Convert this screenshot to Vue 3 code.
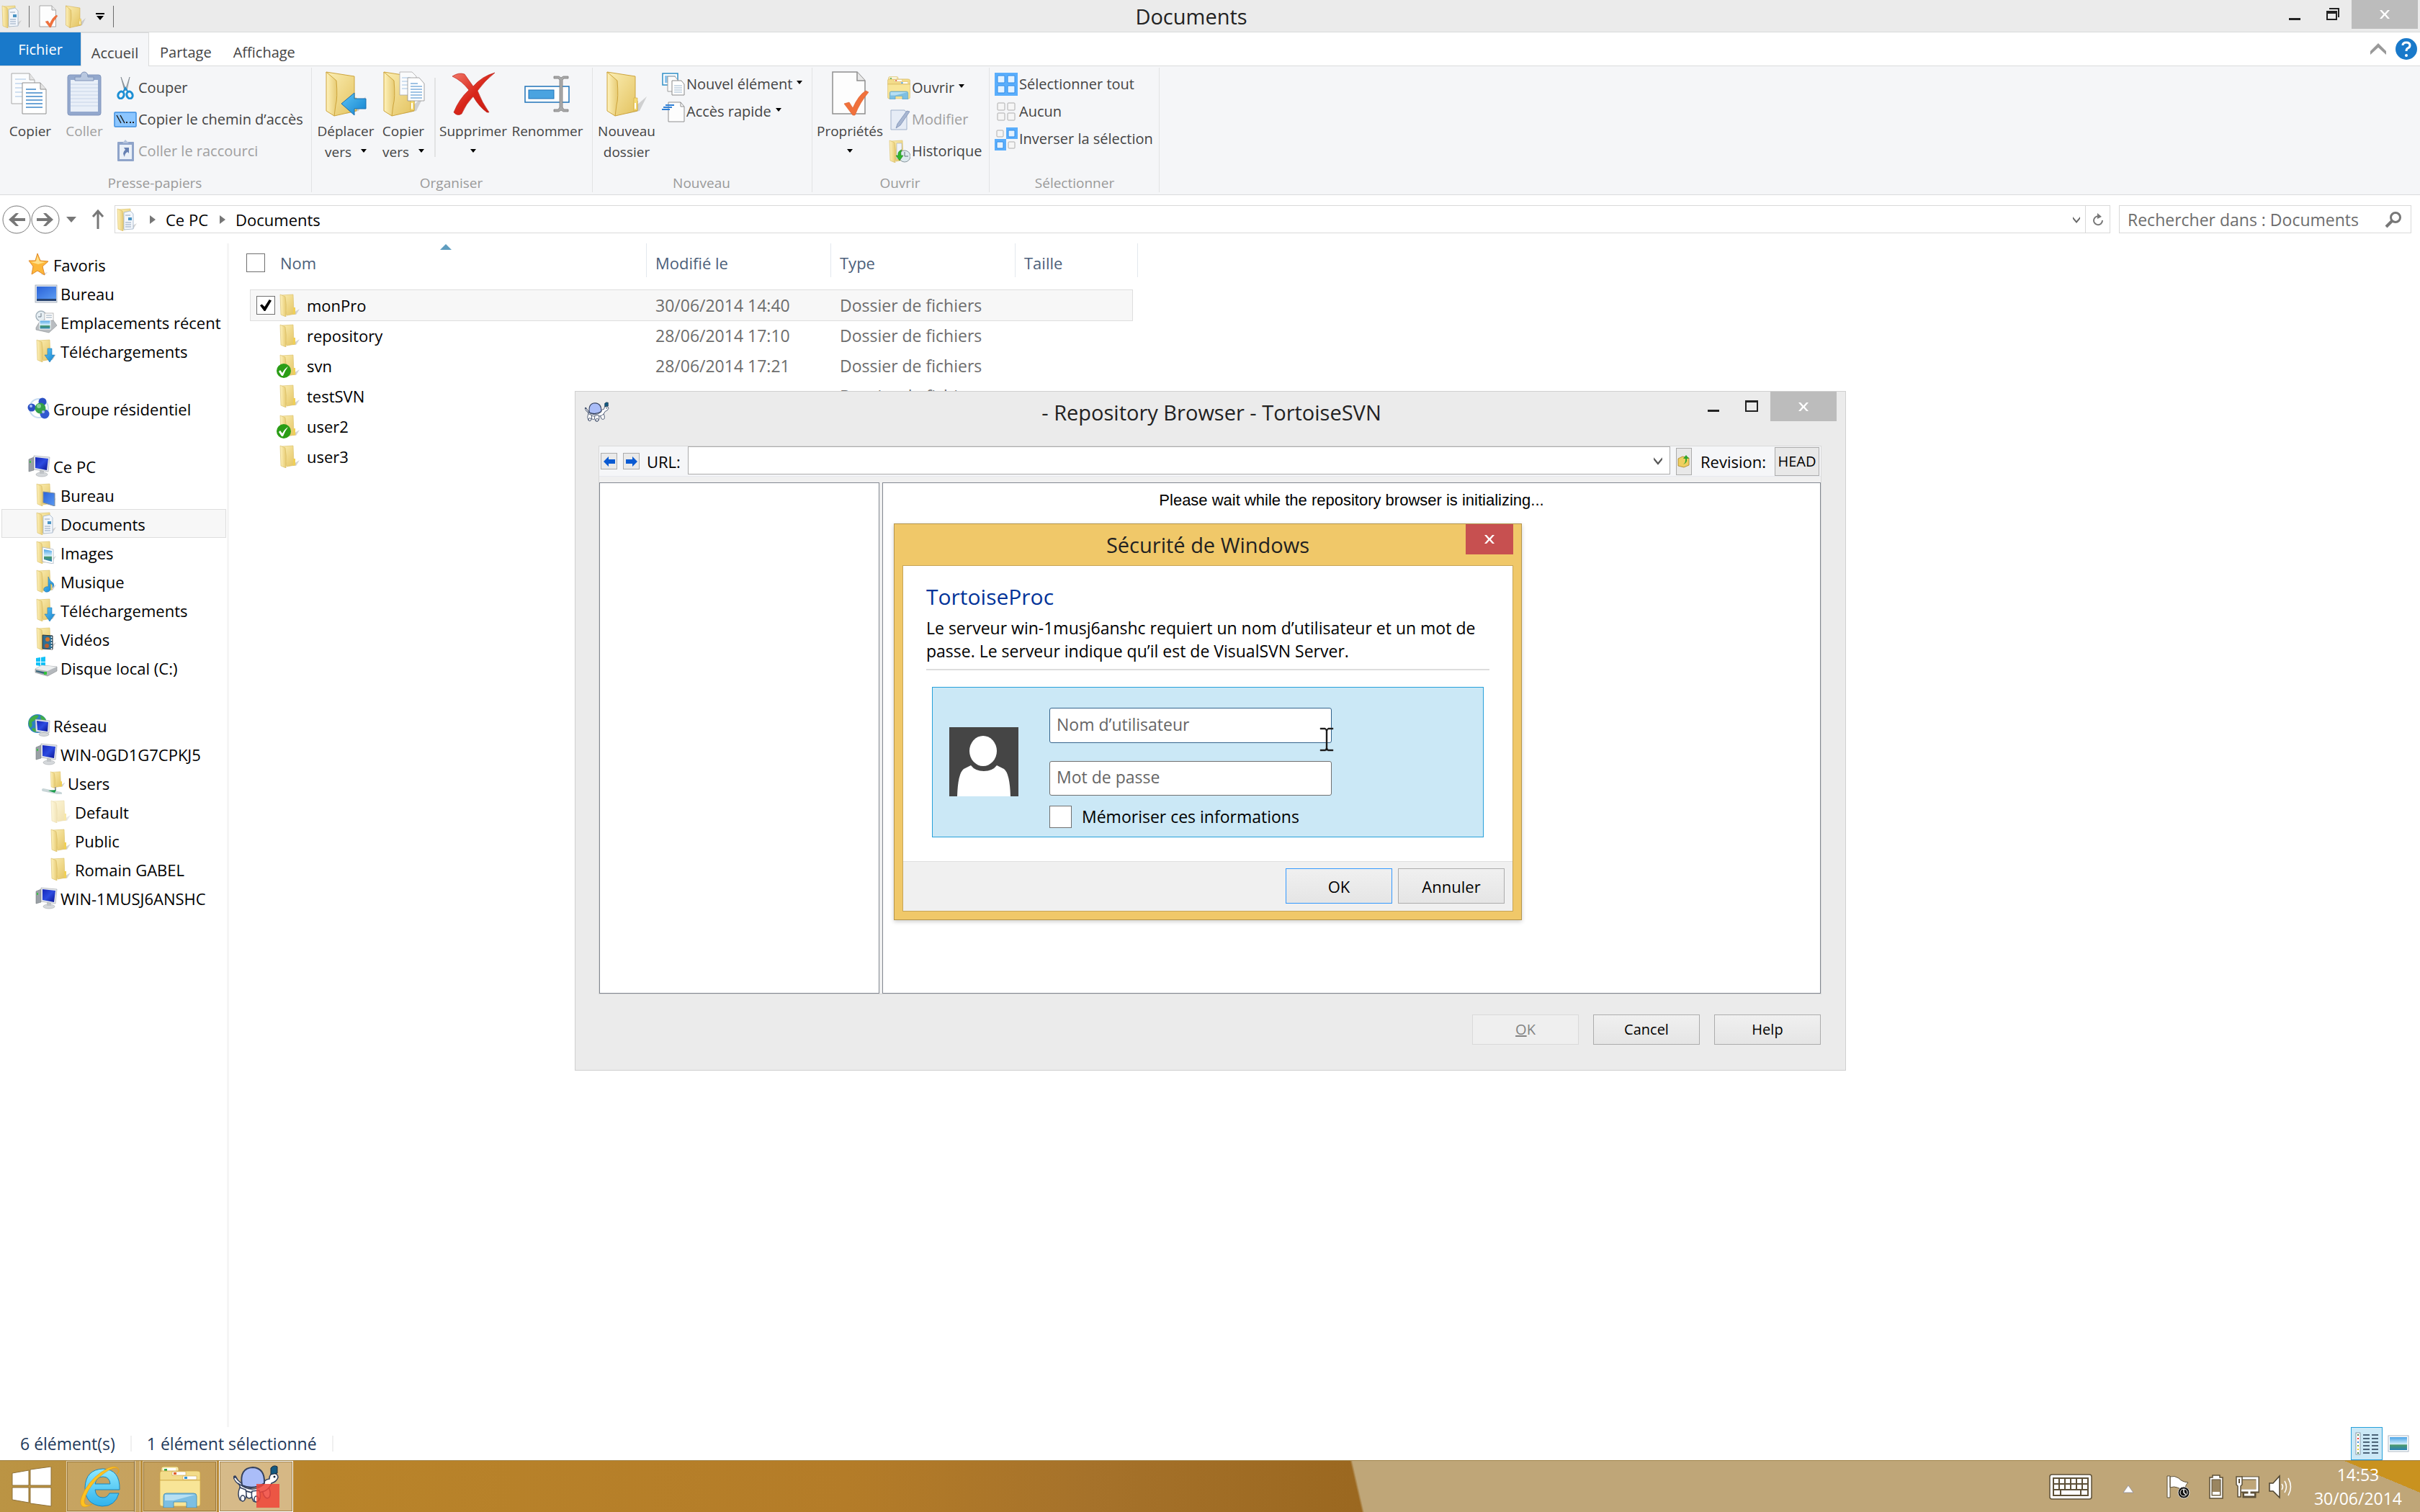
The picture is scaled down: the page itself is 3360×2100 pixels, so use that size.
<script setup>
import { ref } from 'vue'

const tree = [
  { id: 'fav', label: 'Favoris', icon: 'star', level: 0 },
  { id: 'fav-desk', label: 'Bureau', icon: 'desktop', level: 1 },
  { id: 'fav-recent', label: 'Emplacements récent', icon: 'recent', level: 1 },
  { id: 'fav-down', label: 'Téléchargements', icon: 'f-down', level: 1 },
  { id: 'home', label: 'Groupe résidentiel', icon: 'homegroup', level: 0, gap: true },
  { id: 'pc', label: 'Ce PC', icon: 'computer', level: 0, gap: true },
  { id: 'pc-desk', label: 'Bureau', icon: 'f-desk', level: 1 },
  { id: 'pc-docs', label: 'Documents', icon: 'f-docs', level: 1, current: true },
  { id: 'pc-img', label: 'Images', icon: 'f-img', level: 1 },
  { id: 'pc-mus', label: 'Musique', icon: 'f-mus', level: 1 },
  { id: 'pc-down', label: 'Téléchargements', icon: 'f-down', level: 1 },
  { id: 'pc-vid', label: 'Vidéos', icon: 'f-vid', level: 1 },
  { id: 'pc-c', label: 'Disque local (C:)', icon: 'disk', level: 1 },
  { id: 'net', label: 'Réseau', icon: 'network', level: 0, gap: true },
  { id: 'net-a', label: 'WIN-0GD1G7CPKJ5', icon: 'computer', level: 1 },
  { id: 'net-users', label: 'Users', icon: 'f-share', level: 2 },
  { id: 'net-default', label: 'Default', icon: 'folder', level: 3, faded: true },
  { id: 'net-public', label: 'Public', icon: 'folder', level: 3 },
  { id: 'net-romain', label: 'Romain GABEL', icon: 'folder', level: 3 },
  { id: 'net-b', label: 'WIN-1MUSJ6ANSHC', icon: 'computer', level: 1 },
]

const files = ref([
  { name: 'monPro', date: '30/06/2014 14:40', type: 'Dossier de fichiers', selected: true },
  { name: 'repository', date: '28/06/2014 17:10', type: 'Dossier de fichiers' },
  { name: 'svn', date: '28/06/2014 17:21', type: 'Dossier de fichiers', versioned: true },
  { name: 'testSVN', type: 'Dossier de fichiers' },
  { name: 'user2', versioned: true },
  { name: 'user3' },
])

const url = ref('')
const user = ref('')
const password = ref('')
const remember = ref(false)
</script>

<template>
  <div class="screen">
    <svg class="defs" width="0" height="0" aria-hidden="true">
      <defs>
        <linearGradient id="g-back" x1="0" y1="0" x2="1" y2="1">
          <stop offset="0" stop-color="#fbeeb4" /><stop offset="1" stop-color="#e3c25e" />
        </linearGradient>
        <linearGradient id="g-flap" x1="0" y1="0" x2="1" y2="0">
          <stop offset="0" stop-color="#fff3bd" /><stop offset="1" stop-color="#e6ca72" />
        </linearGradient>
        <linearGradient id="g-blue" x1="0" y1="0" x2="1" y2="1">
          <stop offset="0" stop-color="#5cc4f5" /><stop offset="1" stop-color="#1382cf" />
        </linearGradient>
        <linearGradient id="g-screen" x1="0" y1="0" x2="1" y2="1">
          <stop offset="0" stop-color="#1626b8" /><stop offset="0.5" stop-color="#2c4be0" /><stop offset="1" stop-color="#0a1390" />
        </linearGradient>
        <linearGradient id="g-desk" x1="0" y1="0" x2="1" y2="1">
          <stop offset="0" stop-color="#2a62d8" /><stop offset="1" stop-color="#5b9bf2" />
        </linearGradient>
        <linearGradient id="g-red" x1="0" y1="0" x2="1" y2="1">
          <stop offset="0" stop-color="#f2796a" /><stop offset="0.5" stop-color="#d8261a" /><stop offset="1" stop-color="#c8190f" />
        </linearGradient>
        <linearGradient id="g-ie" x1="0" y1="0" x2="0" y2="1">
          <stop offset="0" stop-color="#8ee9ff" /><stop offset="1" stop-color="#2fb2ec" />
        </linearGradient>
        <linearGradient id="g-sky" x1="0" y1="0" x2="0" y2="1">
          <stop offset="0" stop-color="#4ba3e6" /><stop offset="0.55" stop-color="#d6f0fb" /><stop offset="0.6" stop-color="#4c9a6b" /><stop offset="1" stop-color="#2b82b8" />
        </linearGradient>
      </defs>

      <symbol id="folder" viewBox="0 0 32 32">
        <path d="M18 28 L30 21 L25 29 Z" fill="#b9b9b9" opacity=".6" />
        <path d="M5 2 L21 1 L22 24 L24 25 L24 28 L12 30 Z" fill="url(#g-back)" stroke="#d9bd62" stroke-width=".6" />
        <path d="M21 19 h3 v9 l-3 1z" fill="#f0d056" />
        <path d="M3 1 L10 4 Q12 16 11 24 L11 32 L4 29 Z" fill="url(#g-flap)" stroke="#d6ba60" stroke-width=".6" />
      </symbol>
      <symbol id="folder-big" viewBox="0 0 60 64">
        <path d="M30 60 L58 36 L48 56 Z" fill="#8a8a8a" opacity=".35" />
        <path d="M3 2 L42 8 V40 L45 42 V56 L14 63 Z" fill="url(#g-back)" stroke="#cda43c" stroke-width="1" />
        <path d="M40 38 h5 v17 l-5 1z" fill="#f5dc74" stroke="#cda43c" stroke-width=".6" />
        <rect x="41" y="45" width="2" height="8" fill="#fff" />
        <path d="M3 2 L17 14 Q19 38 16 48 L14 63 L3 56 Z" fill="url(#g-flap)" stroke="#cda43c" stroke-width="1" />
      </symbol>
      <symbol id="f-docs" viewBox="0 0 32 32">
        <use href="#folder" />
        <path d="M12 6 L21 4 L25 8 L25 29 L12 30 Z" fill="#f2f6fb" stroke="#9fb3c8" stroke-width=".8" />
        <path d="M14 10 h7 M14 20 h8 M14 23 h8 M14 26 h8" stroke="#8fa4bd" />
        <rect x="18" y="13" width="5" height="4" fill="#4b94c4" />
      </symbol>
      <symbol id="f-down" viewBox="0 0 32 32">
        <use href="#folder" />
        <path d="M18 13 h6 v9 h4 L21 32 L14 22 h4z" fill="url(#g-blue)" stroke="#2478b4" stroke-width=".6" />
      </symbol>
      <symbol id="f-desk" viewBox="0 0 32 32">
        <use href="#folder" />
        <path d="M12 12 L28 14 V32 L12 27 Z" fill="url(#g-desk)" stroke="#7f8b99" />
      </symbol>
      <symbol id="f-img" viewBox="0 0 32 32">
        <use href="#folder" />
        <path d="M11 9 L26 12 V32 L11 29 Z" fill="#fff" stroke="#a7b4c2" stroke-width=".8" />
        <path d="M13 12 L24 14 V29 L13 26 Z" fill="url(#g-sky)" />
      </symbol>
      <symbol id="f-mus" viewBox="0 0 32 32">
        <use href="#folder" />
        <path d="M19 10 Q20 15 26 19 Q28 22 25 25 Q26 21 22 19 V28 Q20 32 15 31 Q11 28 14 25 Q17 23 19 24 Z" fill="url(#g-blue)" stroke="#2376ae" stroke-width=".6" />
      </symbol>
      <symbol id="f-vid" viewBox="0 0 32 32">
        <use href="#folder" />
        <path d="M11 11 L25 12 V31 L11 30 Z" fill="#2d6f94" stroke="#333" />
        <circle cx="18" cy="17" r="3" fill="#d4732c" /><circle cx="17" cy="26" r="3" fill="#b55d2e" />
        <path d="M23.500 13 V31" stroke="#fff" stroke-width="1.500" stroke-dasharray="2 2" />
      </symbol>
      <symbol id="f-share" viewBox="0 0 32 32">
        <g transform="translate(10 0) scale(.75)"><use href="#folder" width="32" height="32" /></g>
        <path d="M19 22 V27" stroke="#9a9a9a" stroke-width="2" />
        <path d="M2 26 L26 31" stroke="#c9d6d8" stroke-width="4" stroke-linecap="round" />
        <path d="M9 27 L20 26 L18 30 Z" fill="#1a9c4a" />
      </symbol>
      <symbol id="star" viewBox="0 0 32 32">
        <path d="M18 30 L28 27 L24 31Z" fill="#bbb" opacity=".6" />
        <path d="M14 1 L18 11 L29 12 L21 19 L24 31 L14 25 L6 30 L8 19 L2 11 L11 11 Z" fill="#fdb73a" stroke="#e0892a" />
        <path d="M14 4 L17 12 L25 13 L15 16 L5 13 L12 12 Z" fill="#ffe08a" />
      </symbol>
      <symbol id="desktop" viewBox="0 0 32 32">
        <rect x="1" y="5" width="30" height="24" fill="#dfe5ec" stroke="#9ba6b3" stroke-width=".8" />
        <rect x="3" y="7" width="27" height="17" fill="url(#g-desk)" />
        <rect x="3" y="24" width="27" height="3" fill="#27436f" />
      </symbol>
      <symbol id="recent" viewBox="0 0 32 32">
        <circle cx="9" cy="8" r="7" fill="#e6eef3" stroke="#a5b3bc" stroke-width="1.500" /><path d="M9 4 V9 H5" fill="none" stroke="#6c7b86" />
        <rect x="14" y="4" width="12" height="11" fill="#fff" stroke="#a9a9a9" stroke-width=".8" />
        <path d="M16 7 h8 M16 10 h8" stroke="#8fa3b5" />
        <path d="M2 24 L8 14 H26 L31 21 L20 31 L2 27 Z" fill="#b9bdc1" stroke="#85898d" stroke-width=".6" />
        <rect x="7" y="14" width="15" height="12" fill="url(#g-sky)" stroke="#fff" />
      </symbol>
      <symbol id="homegroup" viewBox="0 0 32 32">
        <circle cx="16" cy="16" r="13" fill="none" stroke="#c8dcf0" stroke-width="2" />
        <circle cx="21" cy="7" r="5.500" fill="#2b50c4" /><circle cx="6" cy="15" r="5.500" fill="#2b50c4" />
        <circle cx="24" cy="24" r="6.500" fill="#3158cf" /><circle cx="18" cy="16" r="7.500" fill="#35a04a" />
        <circle cx="16" cy="13" r="3" fill="#9fe0a8" opacity=".8" /><circle cx="22" cy="21" r="2" fill="#a8bff5" /><circle cx="5" cy="13" r="2" fill="#a8bff5" />
      </symbol>
      <symbol id="computer" viewBox="0 0 32 32">
        <path d="M2 7 L9 4 V22 L2 24 Z" fill="#9aa0a6" stroke="#6f757b" stroke-width=".6" /><rect x="3" y="9" width="2" height="3" fill="#3fc04a" />
        <ellipse cx="20" cy="28" rx="8" ry="3" fill="#d5d8db" stroke="#a5a9ad" stroke-width=".6" /><path d="M17 22 h6 v5 h-6z" fill="#c0c4c8" />
        <path d="M9 2 L31 4 L29 24 L9 21 Z" fill="#e6e9ec" stroke="#9aa0a6" stroke-width=".6" />
        <path d="M11 4 L29 6 L27 22 L11 19 Z" fill="url(#g-screen)" />
      </symbol>
      <symbol id="disk" viewBox="0 0 32 32">
        <path d="M2 3 L8 2 V8 H2z M9 2 L15 1 V8 H9z M2 9 H8 V14 L2 13z M9 9 H15 V15 L9 14z" fill="#12c1f7" />
        <path d="M1 18 L10 13 L31 15 V21 L18 28 L1 23 Z" fill="#b4b8bc" stroke="#84888c" stroke-width=".6" />
        <path d="M1 18 L10 13 L31 15 L18 21 Z" fill="#eceeef" />
        <path d="M2 20 L17 23 V26 L2 22 Z" fill="#38667c" /><rect x="13" y="22" width="4" height="4" fill="#31c23c" />
      </symbol>
      <symbol id="network" viewBox="0 0 32 32">
        <circle cx="14" cy="14" r="13" fill="#2d7fc4" /><path d="M3 8 Q10 0 16 3 Q12 9 6 12 Q8 18 4 20 Q0 14 3 8 Z M18 2 Q25 5 26 10 L19 9z M8 20 Q14 20 12 26 Q8 25 6 22z" fill="#41ad46" />
        <ellipse cx="23" cy="29" rx="7" ry="2.500" fill="#d5d8db" stroke="#a5a9ad" stroke-width=".6" />
        <path d="M11 8 L31 10 L30 27 L12 25 Z" fill="#e6e9ec" stroke="#9aa0a6" stroke-width=".6" /><path d="M13 10 L29 12 L28 25 L14 23 Z" fill="url(#g-screen)" />
      </symbol>

      <symbol id="doc-check" viewBox="0 0 52 64">
        <path d="M2 2 H36 L47 14 V60 H2 Z" fill="#fdfdfd" stroke="#8f8f8f" stroke-width="1.500" />
        <path d="M36 2 V14 H47" fill="#e8e8e8" stroke="#8f8f8f" stroke-width="1.500" />
        <path d="M18 46 L25 44 L30 52 Q38 34 48 28 L52 30 Q40 44 33 62 H30 Z" fill="#f0713c" stroke="#dd5a26" stroke-width=".6" />
      </symbol>
      <symbol id="copy-docs" viewBox="0 0 56 60">
        <path d="M2 2 H27 L34 11 V44 H2 Z" fill="#fbfcfd" stroke="#a9a9a9" /><path d="M27 2 V11 H34" fill="#e4e4e4" stroke="#a9a9a9" />
        <path d="M7 10 H22 M7 16 H28 M7 22 H28 M7 28 H28 M7 34 H28" stroke="#a4c3e4" />
        <path d="M17 15 H42 L50 24 V58 H17 Z" fill="#fff" stroke="#8e8e8e" /><path d="M42 15 V24 H50" fill="#e4e4e4" stroke="#8e8e8e" />
        <path d="M22 24 H36 M22 29 H45 M22 34 H45 M22 39 H45 M22 44 H45 M22 49 H45" stroke="#3e86c9" stroke-width="1.500" />
      </symbol>
      <symbol id="clip" viewBox="0 0 50 64">
        <rect x="2" y="6" width="46" height="56" rx="3" fill="#93a8cd" stroke="#8296bd" />
        <path d="M6 13 H44 V57 H6 Z" fill="#e9eff8" /><path d="M6 19 H44 M6 24 H44 M6 29 H44 M6 34 H44 M6 39 H44 M6 44 H44 M6 49 H44" stroke="#c7d4e8" />
        <path d="M12 14 V9 H20 Q20 2 25 2 Q30 2 30 9 H38 V14 Z" fill="#b9c8e0" stroke="#8094b9" />
      </symbol>
      <symbol id="scissors" viewBox="0 0 32 32">
        <path d="M10 1 L17 19 L15 20 Z" fill="#9aa3aa" stroke="#6a747c" stroke-width=".6" /><path d="M22 1 L16 19 L18 20 Z" fill="#bcc3c8" stroke="#6a747c" stroke-width=".6" />
        <ellipse cx="10" cy="26" rx="4" ry="5" fill="none" stroke="#1c8fd4" stroke-width="3" transform="rotate(20 10 26)" />
        <ellipse cx="22" cy="26" rx="4" ry="5" fill="none" stroke="#1c8fd4" stroke-width="3" transform="rotate(-20 22 26)" />
        <path d="M13 22 L16 16 L20 22" fill="none" stroke="#1c8fd4" stroke-width="2" />
      </symbol>
      <symbol id="path" viewBox="0 0 32 32">
        <rect x="1" y="6" width="30" height="20" rx="1" fill="#8cc6ff" stroke="#3c8ee0" stroke-width="1.500" />
        <path d="M4 10 L10 21 M9 10 L15 21" stroke="#222" stroke-width="1.500" /><path d="M17 20 h2 M22 20 h2 M26 20 h2" stroke="#222" stroke-width="2" />
      </symbol>
      <symbol id="clip-link" viewBox="0 0 32 32">
        <rect x="5" y="3" width="23" height="27" rx="1" fill="#8fa4ca" /><rect x="8" y="7" width="17" height="20" fill="#eaf0f8" /><path d="M12 5 L16 0 L21 5z" fill="#b3c2dc" />
        <path d="M14 11 H21 V19 L19 17 Q15 19 15 24 Q11 18 16 14 Z" fill="#6781b3" />
      </symbol>
      <symbol id="move-to" viewBox="0 0 60 64">
        <use href="#folder-big" width="60" height="64" />
        <path d="M24 46 L42 31 V39 H58 V53 H42 V62 Z" fill="url(#g-blue)" stroke="#1a6fb0" />
      </symbol>
      <symbol id="copy-to" viewBox="0 0 60 64">
        <use href="#folder-big" width="60" height="64" />
        <path d="M25 2 H42 L48 8 V34 H25 Z" fill="#fafbfc" stroke="#aaa" stroke-width=".8" /><path d="M28 10 H40 M28 15 H40 M28 20 H40 M28 25 H40" stroke="#a4c3e4" />
        <path d="M36 10 H52 L59 18 V42 H36 Z" fill="#fff" stroke="#8e8e8e" stroke-width=".8" /><path d="M40 18 H50 M40 22 H56 M40 26 H56 M40 30 H56 M40 34 H56 M40 38 H56" stroke="#3e86c9" />
      </symbol>
      <symbol id="delete" viewBox="0 0 60 64">
        <path d="M1 8 Q10 2 18 5 L30 22 Q42 8 60 3 Q46 14 36 28 Q42 44 52 58 L49 58 Q38 50 30 36 Q20 46 14 60 Q8 64 3 58 Q10 40 24 27 Q14 14 1 8 Z" fill="url(#g-red)" stroke="#b3160d" stroke-width=".6" />
      </symbol>
      <symbol id="rename" viewBox="0 0 64 64">
        <rect x="1" y="22" width="61" height="22" fill="#fff" stroke="#1f73b8" stroke-width="1.500" />
        <rect x="6" y="27" width="35" height="12" fill="#4aa3e0" stroke="#1f73b8" />
        <path d="M41 8 H48 L51 10 L54 8 H61 V11 H55 L53 13 V51 L55 54 H61 V57 H54 L51 55 L48 57 H41 V54 H47 L49 51 V13 L47 11 H41 Z" fill="#a9a9a9" stroke="#7b7b7b" stroke-width=".8" />
      </symbol>
      <symbol id="new-item" viewBox="0 0 32 32">
        <rect x="1" y="1" width="21" height="16" fill="#fff" stroke="#2f8fc6" stroke-width="1.500" /><rect x="4" y="4" width="15" height="10" fill="#8cc4ec" />
        <path d="M8 5 H18 L22 10 V26 H8 Z" fill="#fbfbfb" stroke="#9c9c9c" /><path d="M14 11 H27 L31 16 V31 H14 Z" fill="#fff" stroke="#8a8a8a" />
        <path d="M17 18 H28 M17 21 H28 M17 24 H28 M17 27 H28" stroke="#9db6cd" />
      </symbol>
      <symbol id="quick" viewBox="0 0 32 32">
        <path d="M9 3 H26 L31 9 V30 H9 Z" fill="#fdfdfd" stroke="#8f8f8f" /><path d="M26 3 V9 H31" fill="none" stroke="#8f8f8f" />
        <path d="M5 7 H17 M2 10 H14 M0 13 H11" stroke="#2e7fd6" stroke-width="2" />
      </symbol>
      <symbol id="explorer" viewBox="0 0 58 58">
        <path d="M3 4 Q3 1 6 1 H24 Q27 1 27 4 V8 H3 Z" fill="#f7ebae" stroke="#c9a243" stroke-width=".8" /><rect x="6" y="3" width="17" height="5" fill="#fff" /><rect x="7" y="4" width="4" height="3" fill="#35a846" />
        <path d="M1 14 V10 Q1 7 4 7 H52 Q57 7 57 10 V20 H1 Z" fill="#f3dc8a" stroke="#c9a243" stroke-width=".8" />
        <rect x="18" y="8" width="19" height="5" fill="#fff" stroke="#c9a243" stroke-width=".6" /><rect x="20" y="9" width="4" height="3" fill="#e2602e" />
        <rect x="33" y="14" width="19" height="5" fill="#fff" stroke="#c9a243" stroke-width=".6" /><rect x="35" y="15" width="4" height="3" fill="#3394d4" />
        <path d="M1 20 H57 V53 Q57 56 54 56 H4 Q1 56 1 53 Z" fill="#f8e597" stroke="#cfa94a" stroke-width=".8" />
        <path d="M6 56 V42 Q6 38 10 38 H48 Q52 38 52 42 V58 H38 V50 H20 V58 H6 Z" fill="#7dbfe2" stroke="#3b88b4" stroke-width=".8" /><path d="M8 40 H50 L20 48 H8Z" fill="#c5e7f6" opacity=".8" />
      </symbol>
      <symbol id="edit" viewBox="0 0 32 32">
        <path d="M5 3 H24 L27 7 V30 H5 Z" fill="#e6ecf6" stroke="#9fb0cb" /><path d="M31 5 L27 4 L14 22 L12 28 L18 24 Z" fill="#a8b7d2" stroke="#7c8fb5" stroke-width=".8" />
      </symbol>
      <symbol id="history" viewBox="0 0 32 32">
        <use href="#folder" /><path d="M13 5 H20 V25 L13 27z" fill="#f0f3f8" stroke="#a4b0c0" stroke-width=".6" />
        <circle cx="24" cy="23" r="8" fill="#dde9ee" stroke="#8a979e" /><path d="M24 17 V23 H29" fill="none" stroke="#607078" />
        <path d="M20 14 Q14 16 15 22 H12 L17 29 L22 22 H19 Q18 18 20 14z" fill="#2fb52c" stroke="#1b7d1c" stroke-width=".6" />
      </symbol>
      <symbol id="sel-all" viewBox="0 0 32 32">
        <rect width="32" height="32" fill="#5aaefc" />
        <g fill="#e4f2ff" stroke="#2b8ae8"><rect x="4" y="4" width="10" height="10" rx="1" /><rect x="18" y="4" width="10" height="10" rx="1" /><rect x="4" y="18" width="10" height="10" rx="1" /><rect x="18" y="18" width="10" height="10" rx="1" /></g>
      </symbol>
      <symbol id="sel-none" viewBox="0 0 32 32">
        <g fill="#f6f6f6" stroke="#adadad"><rect x="4" y="4" width="10" height="10" rx="1" /><rect x="18" y="4" width="10" height="10" rx="1" /><rect x="4" y="18" width="10" height="10" rx="1" /><rect x="18" y="18" width="10" height="10" rx="1" /></g>
      </symbol>
      <symbol id="sel-inv" viewBox="0 0 32 32">
        <rect x="16" width="16" height="16" fill="#5aaefc" /><rect y="16" width="16" height="16" fill="#5aaefc" />
        <g stroke-width="1"><rect x="3" y="4" width="9" height="9" rx="1" fill="#f6f6f6" stroke="#adadad" /><rect x="19" y="4" width="9" height="9" rx="1" fill="#e4f2ff" stroke="#2b8ae8" /><rect x="3" y="20" width="9" height="9" rx="1" fill="#e4f2ff" stroke="#2b8ae8" /><rect x="19" y="20" width="9" height="9" rx="1" fill="#f6f6f6" stroke="#adadad" /></g>
      </symbol>
      <symbol id="turtle" viewBox="0 0 64 52">
        <path d="M2 17 L5 22 L14 30" fill="none" stroke="#33415f" stroke-width="5" stroke-linecap="round" />
        <path d="M2 18 L5 22 L14 30" fill="none" stroke="#fff" stroke-width="2" />
        <g fill="#fff" stroke="#33415f" stroke-width="1.500">
          <ellipse cx="46" cy="37" rx="5" ry="9" transform="rotate(-12 46 37)" />
          <ellipse cx="22" cy="39" rx="5" ry="7" />
          <path d="M8 26 Q26 40 42 27 Q42 20 50 19 Q50 12 56 11 Q62 12 62 17 Q60 23 53 25 Q50 33 43 36 Q26 42 10 32 Z" />
          <path d="M9 31 Q5 40 9 48 Q14 52 17 46 Q19 40 17 34 Z" />
          <path d="M26 36 Q24 44 28 50 Q35 53 37 46 Q38 40 36 35 Z" />
          <ellipse cx="13" cy="46" rx="3" ry="4" /><ellipse cx="32" cy="47" rx="3" ry="4" />
        </g>
        <path d="M12 28 Q8 4 27 3 Q44 4 43 25 Q28 35 12 28 Z" fill="#aabdf8" stroke="#33415f" stroke-width="2" />
        <path d="M52 4 Q56 -1 61 2 V11 L52 13 Z" fill="#145a80" stroke="#16263a" />
        <circle cx="57" cy="16" r="1.500" fill="#16263a" />
      </symbol>
      <symbol id="tick-badge" viewBox="0 0 20 20">
        <circle cx="10" cy="10" r="10" fill="#2b9d16" /><path d="M3 11 L5 9 L8 13 Q11 7 16 4 Q12 9 9 17 H7 Z" fill="#fff" />
      </symbol>
      <symbol id="x" viewBox="0 0 16 16">
        <path d="M1 2 H4 L8 6.500 L12 2 H15 L9.800 8 L15 14 H12 L8 9.500 L4 14 H1 L6.200 8 Z" fill="#fff" />
      </symbol>
      <symbol id="chev" viewBox="0 0 12 12">
        <path d="M1 2 L6 8 L11 2 V5 L6 11 L1 5 Z" fill="currentColor" />
      </symbol>
    </svg>

    <header class="titlebar">
      <div class="quick-access">
        <svg width="32" height="32"><use href="#f-docs" /></svg>
        <span class="bar"></span>
        <svg class="q-doc" width="28" height="32"><use href="#doc-check" /></svg>
        <svg width="32" height="32"><use href="#folder-big" /></svg>
        <svg width="12" height="10" viewBox="0 0 12 10"><path d="M0 0 H12 V2 H0z M1 4 H11 L6 10z" /></svg>
        <span class="bar"></span>
      </div>
      <h1 class="window-title">Documents</h1>
      <div class="window-buttons">
        <button aria-label="Réduire"><svg width="18" height="18" viewBox="0 0 18 18"><path d="M1 14 H17 V17 H1z" fill="#222" /></svg></button>
        <button aria-label="Restaurer"><svg width="18" height="18" viewBox="0 0 18 18"><path d="M4 1 H17 V13" fill="none" stroke="#222" stroke-width="2" /><path d="M1 6 H14 V16 H1z" fill="none" stroke="#222" stroke-width="2" /><path d="M0 4 H15 V8 H0z" fill="#222" /></svg></button>
        <button class="close" aria-label="Fermer"><svg width="16" height="16"><use href="#x" /></svg></button>
      </div>
    </header>

    <nav class="tabs">
      <button class="tab file">Fichier</button>
      <button class="tab active">Accueil</button>
      <button class="tab">Partage</button>
      <button class="tab">Affichage</button>
      <span class="spring"></span>
      <button class="fold" aria-label="Réduire le ruban"><svg width="24" height="18" viewBox="0 0 24 18"><path d="M1 17 V12 L12 1 L23 12 V17 L12 7 Z" fill="#999" /></svg></button>
      <button class="help" aria-label="Aide"><svg width="30" height="30" viewBox="0 0 30 30"><circle cx="15" cy="15" r="15" fill="#1979ca" /><path d="M10 10 Q10 6 15 6 Q20 6 20 10 Q20 13 17 14 Q15 15 15 18" fill="none" stroke="#fff" stroke-width="3" /><circle cx="15" cy="24" r="2" fill="#fff" /></svg></button>
    </nav>

    <section class="ribbon">
      <div class="group g-clip">
        <div class="tools">
          <button class="big b76"><svg width="56" height="60"><use href="#copy-docs" /></svg><span>Copier</span></button>
          <button class="big b73" disabled><svg width="50" height="62"><use href="#clip" /></svg><span>Coller</span></button>
          <div class="small wide">
            <button><svg width="32" height="32"><use href="#scissors" /></svg>Couper</button>
            <button><svg width="32" height="32"><use href="#path" /></svg>Copier le chemin d’accès</button>
            <button disabled><svg width="32" height="32"><use href="#clip-link" /></svg>Coller le raccourci</button>
          </div>
        </div>
        <p>Presse-papiers</p>
      </div>
      <div class="group g-org">
        <div class="tools">
          <button class="big b86"><svg width="60" height="64"><use href="#move-to" /></svg><span>Déplacer</span><span>vers <i class="caret"></i></span></button>
          <button class="big b73"><svg width="60" height="64"><use href="#copy-to" /></svg><span>Copier</span><span>vers <i class="caret"></i></span></button>
          <span class="rule"></span>
          <button class="big b101"><svg width="60" height="62"><use href="#delete" /></svg><span>Supprimer</span><span><i class="caret alone"></i></span></button>
          <button class="big b106"><svg width="64" height="64"><use href="#rename" /></svg><span>Renommer</span></button>
        </div>
        <p>Organiser</p>
      </div>
      <div class="group g-new">
        <div class="tools">
          <button class="big b86"><svg width="60" height="64"><use href="#folder-big" /></svg><span>Nouveau</span><span>dossier</span></button>
          <div class="small">
            <button><svg width="32" height="32"><use href="#new-item" /></svg>Nouvel élément<i class="caret"></i></button>
            <button><svg width="32" height="32"><use href="#quick" /></svg>Accès rapide<i class="caret"></i></button>
          </div>
        </div>
        <p>Nouveau</p>
      </div>
      <div class="group g-open">
        <div class="tools">
          <button class="big b96"><svg width="52" height="64"><use href="#doc-check" /></svg><span>Propriétés</span><span><i class="caret alone"></i></span></button>
          <div class="small wide">
            <button><svg width="32" height="32"><use href="#explorer" /></svg>Ouvrir<i class="caret"></i></button>
            <button disabled><svg width="32" height="32"><use href="#edit" /></svg>Modifier</button>
            <button><svg width="32" height="32"><use href="#history" /></svg>Historique</button>
          </div>
        </div>
        <p>Ouvrir</p>
      </div>
      <div class="group g-select">
        <div class="tools">
          <div class="small">
            <button><svg width="32" height="32"><use href="#sel-all" /></svg>Sélectionner tout</button>
            <button><svg width="32" height="32"><use href="#sel-none" /></svg>Aucun</button>
            <button><svg width="32" height="32"><use href="#sel-inv" /></svg>Inverser la sélection</button>
          </div>
        </div>
        <p>Sélectionner</p>
      </div>
    </section>

    <div class="address-row">
      <button aria-label="Précédent"><svg width="40" height="40" viewBox="0 0 40 40"><circle cx="20" cy="20" r="19" fill="#fff" stroke="#777" /><path d="M32 18 H17 L23 11 H19 L9 20 L19 29 H23 L17 22 H32z" fill="#777" /></svg></button>
      <button aria-label="Suivant"><svg width="40" height="40" viewBox="0 0 40 40"><circle cx="20" cy="20" r="19" fill="#fff" stroke="#777" /><path d="M8 18 H23 L17 11 H21 L31 20 L21 29 H17 L23 22 H8z" fill="#777" /></svg></button>
      <button class="recent" aria-label="Emplacements récents"><svg width="14" height="8" viewBox="0 0 14 8"><path d="M0 0 H14 L7 8z" fill="#777" /></svg></button>
      <button class="up" aria-label="Remonter"><svg width="18" height="28" viewBox="0 0 18 28"><path d="M9 2 V27 M2 10 L9 2 L16 10" fill="none" stroke="#777" stroke-width="3" /></svg></button>
      <div class="address">
        <svg width="32" height="32"><use href="#f-docs" /></svg>
        <i class="sep"></i><a href="#pc">Ce PC</a>
        <i class="sep"></i><a href="#pc-docs">Documents</a>
        <span class="spring"></span>
        <button class="addr-open" aria-label="Emplacements précédents"><svg width="12" height="12"><use href="#chev" /></svg></button>
        <button class="refresh" aria-label="Actualiser"><svg width="16" height="18" viewBox="0 0 16 18"><path d="M11 5 A6 6 0 1 0 14 10" fill="none" stroke="#777" stroke-width="2" /><path d="M7 0 L13 5 L7 8z" fill="#777" /></svg></button>
      </div>
      <div class="search">
        <input type="text" aria-label="Rechercher" placeholder="Rechercher dans : Documents" />
        <svg width="24" height="24" viewBox="0 0 24 24"><circle cx="15" cy="9" r="6.500" fill="none" stroke="#777" stroke-width="3" /><path d="M10 14 L2 22" stroke="#777" stroke-width="4" /></svg>
      </div>
    </div>

    <main class="body">
      <aside class="tree">
        <a v-for="n in tree" :key="n.id" :href="'#' + n.id" :class="['node', 'l' + n.level, { gap: n.gap, current: n.current, faded: n.faded }]">
          <svg width="32" height="32"><use :href="'#' + n.icon" /></svg><span>{{ n.label }}</span>
        </a>
      </aside>
      <div class="files">
        <table>
          <thead>
            <tr>
              <th class="c-name"><span class="name-head"><input type="checkbox" aria-label="Tout sélectionner" />Nom</span><i class="sort"></i></th>
              <th class="c-date">Modifié le</th>
              <th class="c-type">Type</th>
              <th class="c-size">Taille</th>
            </tr>
          </thead>
          <tbody>
            <tr v-for="f in files" :key="f.name" :class="{ selected: f.selected }">
              <td><span class="cell">
                <input type="checkbox" v-model="f.selected" :aria-label="f.name" :class="{ off: !f.selected }" />
                <span class="ficon"><svg width="32" height="32"><use href="#folder" /></svg><svg v-if="f.versioned" class="badge" width="20" height="20"><use href="#tick-badge" /></svg></span>
                {{ f.name }}
              </span></td>
              <td class="dim">{{ f.date }}</td>
              <td class="dim">{{ f.type }}</td>
              <td></td>
            </tr>
          </tbody>
        </table>
      </div>
    </main>

    <footer class="status">
      <span>6 élément(s)</span><i></i><span>1 élément sélectionné</span><i></i>
      <span class="spring"></span>
      <button class="view on" aria-label="Détails">
        <svg width="34" height="34" viewBox="0 0 34 34">
          <g fill="#fff" stroke="#8a9aa8"><rect x="2" y="2" width="6" height="30" /></g>
          <path d="M12 5 h9 m3 0 h9 M12 10 h9 m3 0 h9 M12 15 h9 m3 0 h9 M12 20 h9 m3 0 h9 M12 25 h9 m3 0 h9 M12 30 h9 m3 0 h9" stroke="#4c6478" stroke-width="2" />
          <path d="M4 5 h2 M4 30 h2" stroke="#4a8a50" stroke-width="2" /><path d="M4 10 h2" stroke="#e33" stroke-width="2" /><path d="M4 15 h2" stroke="#38d" stroke-width="2" /><path d="M4 20 h2" stroke="#8b3" stroke-width="2" /><path d="M4 25 h2" stroke="#ec2" stroke-width="2" />
        </svg>
      </button>
      <button class="view" aria-label="Grandes icônes"><svg width="30" height="24" viewBox="0 0 30 24"><rect x="1" y="1" width="28" height="22" fill="#fff" stroke="#a9b6c4" /><rect x="3" y="3" width="24" height="18" fill="url(#g-sky)" /></svg></button>
    </footer>

    <section class="dialog svn" aria-label="Repository Browser">
      <div class="svn-title">
        <svg width="34" height="28"><use href="#turtle" /></svg>
        <h2>- Repository Browser - TortoiseSVN</h2>
        <div class="window-buttons">
          <button aria-label="Minimize"><svg width="18" height="18" viewBox="0 0 18 18"><path d="M1 14 H17 V17 H1z" fill="#222" /></svg></button>
          <button aria-label="Maximize"><svg width="18" height="18" viewBox="0 0 18 18"><path d="M1 2 H17 V16 H1z" fill="none" stroke="#222" stroke-width="2" /><path d="M0 1 H18 V4 H0z" fill="#222" /></svg></button>
          <button class="close" aria-label="Close"><svg width="16" height="16"><use href="#x" /></svg></button>
        </div>
      </div>
      <div class="svn-frame">
        <div class="svn-bar">
          <button class="sq" aria-label="Back"><svg width="16" height="14" viewBox="0 0 16 14"><path d="M0 7 L7 0 V4 H16 V10 H7 V14z" fill="#0a5ad2" /></svg></button>
          <button class="sq" aria-label="Forward"><svg width="16" height="14" viewBox="0 0 16 14"><path d="M16 7 L9 0 V4 H0 V10 H9 V14z" fill="#0a5ad2" /></svg></button>
          <label for="url">URL:</label>
          <div class="combo">
            <select id="url" v-model="url"><option value=""></option></select>
            <svg width="14" height="14"><use href="#chev" /></svg>
          </div>
          <button class="parent" aria-label="Parent folder"><svg width="18" height="18" viewBox="0 0 18 18"><path d="M1 5 L7 2 L16 4 V14 L9 17 L1 15z" fill="#efcf5f" stroke="#a8832a" stroke-width=".8" /><path d="M8 13 Q12 10 11 5 H8 L12 0 L16 5 H13 Q14 11 8 13z" fill="#2fa52c" /></svg></button>
          <span class="rev">Revision:</span>
          <button class="head">HEAD</button>
        </div>
        <div class="panes">
          <div class="pane left"></div>
          <div class="pane right"><p>Please wait while the repository browser is initializing...</p></div>
        </div>
      </div>
      <div class="svn-actions">
        <button class="btn" disabled><u>O</u>K</button>
        <button class="btn">Cancel</button>
        <button class="btn">Help</button>
      </div>
    </section>

    <section class="dialog auth" aria-label="Sécurité de Windows">
      <div class="auth-title">
        <h2>Sécurité de Windows</h2>
        <button class="auth-close" aria-label="Fermer"><svg width="16" height="16"><use href="#x" /></svg></button>
      </div>
      <form class="auth-body" @submit.prevent>
        <div class="auth-main">
          <h3>TortoiseProc</h3>
          <p>Le serveur win-1musj6anshc requiert un nom d’utilisateur et un mot de<br />passe. Le serveur indique qu’il est de VisualSVN Server.</p>
          <hr />
          <div class="card">
            <svg class="avatar" width="96" height="96" viewBox="0 0 96 96"><rect width="96" height="96" fill="#454545" /><ellipse cx="47" cy="33" rx="19" ry="21" fill="#fff" /><path d="M11 96 Q12 64 20 58 L30 53 Q36 61 48 61 Q60 61 66 53 L76 58 Q84 64 85 96 Z" fill="#fff" /></svg>
            <div class="fields">
              <input v-model="user" class="field focus" type="text" aria-label="Nom d’utilisateur" placeholder="Nom d’utilisateur" />
              <input v-model="password" class="field" type="password" aria-label="Mot de passe" placeholder="Mot de passe" />
              <label class="remember"><input v-model="remember" type="checkbox" />Mémoriser ces informations</label>
            </div>
          </div>
        </div>
        <div class="auth-actions">
          <button class="btn primary" type="submit">OK</button>
          <button class="btn" type="button">Annuler</button>
        </div>
      </form>
      <svg class="ibeam" width="20" height="34" viewBox="0 0 20 34"><path d="M1 1 H8 L10 3 L12 1 H19 V3 H12 L11 5 V29 L12 31 H19 V33 H12 L10 32 L8 33 H1 V31 H8 L9 29 V5 L8 3 H1 Z" fill="#111" stroke="#444" stroke-width=".5" /></svg>
    </section>

    <div class="taskbar">
      <button class="start" aria-label="Démarrer"><svg width="56" height="56" viewBox="0 0 56 56"><path d="M1 9 L24 5 V26 H1z M26 4 L55 0 V26 H26z M1 29 H24 V50 L1 46z M26 29 H55 V55 L26 51z" fill="#fff" stroke="#8d7038" stroke-width="1" /></svg></button>
      <button class="task stack" aria-label="Internet Explorer">
        <svg width="60" height="60" viewBox="0 0 60 60"><path d="M58 34 H24 Q25 45 35 45 Q41 45 44 39 H57 Q52 57 34 57 Q10 55 10 31 Q11 6 35 5 Q59 6 58 34 Z M24 26 H45 Q44 16 35 16 Q26 16 24 26 Z" fill="url(#g-ie)" stroke="#1985bd" stroke-width="1" fill-rule="evenodd" /><path d="M57 6 Q54 -1 42 4 Q22 14 10 34 Q0 52 6 57 Q11 60 20 54 Q9 58 9 50 Q11 36 27 19 Q46 2 54 4 Q58 6 55 12 Q58 9 57 6z" fill="#ffc21f" stroke="#d9931a" stroke-width=".6" /></svg>
      </button>
      <button class="task" aria-label="Explorateur de fichiers"><svg width="58" height="58"><use href="#explorer" /></svg></button>
      <button class="task active" aria-label="TortoiseSVN"><svg width="64" height="60" viewBox="0 0 64 60"><use href="#turtle" width="64" height="52" /><rect x="32" y="26" width="32" height="33" fill="#f04438" opacity=".85" /></svg></button>
      <span class="spring"></span>
      <div class="tray">
        <svg class="kbd" width="60" height="36" viewBox="0 0 60 36"><rect x="1" y="1" width="58" height="34" rx="3" fill="#fff" stroke="#5d5037" stroke-width="1.500" /><rect x="5" y="5" width="50" height="26" fill="#5d5037" /><path d="M7 10 H53 M7 18 H53" stroke="#fff" stroke-width="6" stroke-dasharray="6 2" /><path d="M7 26 H15 M17 26 H43 M45 26 H53" stroke="#fff" stroke-width="6" /></svg>
        <svg class="more" width="16" height="12" viewBox="0 0 16 12"><path d="M8 1 L15 11 H1z" fill="#fff" stroke="#8d8d9d" stroke-width=".8" /></svg>
        <svg class="flag" width="34" height="34" viewBox="0 0 34 34"><path d="M2 2 H6 V32 H2z M6 3 Q12 1 18 5 Q22 10 31 11 Q26 16 28 20 Q22 22 16 18 Q12 16 6 18z" fill="#fff" stroke="#5d5037" /><circle cx="25" cy="25" r="8" fill="#111" stroke="#ddd" /><circle cx="25" cy="25" r="5" fill="none" stroke="#fff" stroke-width="1" /><path d="M25 20 V25 L28 28" fill="none" stroke="#fff" stroke-width="1.500" /></svg>
        <svg class="batt" width="20" height="34" viewBox="0 0 20 34"><path d="M5 4 V1 H15 V4 H19 V33 H1 V4z" fill="#fff" stroke="#5d5037" stroke-width="1.500" /><rect x="4" y="7" width="12" height="22" fill="#9a8560" stroke="#5d5037" /><rect x="5" y="24" width="10" height="4" fill="#fff" /></svg>
        <svg class="lan" width="34" height="34" viewBox="0 0 34 34"><path d="M9 5 H32 V23 H22 V27 H27 V30 H13 V27 H18 V23 H9" fill="none" stroke="#5d5037" stroke-width="5" /><path d="M9 5 H31 V22 H9 M13 28 H27 M20 22 V28" fill="none" stroke="#fff" stroke-width="3" /><path d="M2 3 H10 V14 L8 16 V31 H4 V16 L2 14z" fill="#fff" stroke="#5d5037" stroke-width="1.500" /><rect x="5" y="6" width="2" height="6" fill="#5d5037" /></svg>
        <svg width="34" height="34" viewBox="0 0 34 34"><path d="M1 12 H6 L15 2 V32 L6 23 H1z" fill="#fff" stroke="#4c422e" stroke-width="1.500" /><path d="M18 13 Q21 17 18 21 M22 9 Q27 17 22 25 M27 5 Q34 17 27 29" fill="none" stroke="#fff" stroke-width="1.500" /></svg>
        <div class="clock"><span>14:53</span><span>30/06/2014</span></div>
      </div>
    </div>
  </div>
</template>

<style>
body { margin: 0; }
</style>

<style scoped>
* { box-sizing: border-box; }
.screen {
  position: relative;
  display: flex;
  flex-direction: column;
  min-height: 100vh;
  overflow: hidden;
  background: #fff;
  color: #000;
  font-family: "Open Sans", "Noto Sans", sans-serif;
  font-size: 22px;
  line-height: 32px;
}
.defs { position: absolute; }
svg { display: block; flex: none; }
button { margin: 0; padding: 0; border: 0; background: none; font: inherit; color: inherit; }
input, select { margin: 0; font: inherit; }
a { color: inherit; text-decoration: none; }
h1, h2, h3, p { margin: 0; font-weight: 400; }
.spring { flex: 1; }
input[type="checkbox"] {
  appearance: none;
  flex: none;
  width: 26px;
  height: 26px;
  border: 1px solid #707070;
  background: #fff;
  display: grid;
  place-items: center;
}
input[type="checkbox"]:checked::before {
  content: "";
  width: 16px;
  height: 16px;
  background: #000;
  clip-path: polygon(0 52%, 16% 40%, 40% 62%, 80% 0, 100% 10%, 46% 100%, 36% 100%);
}

.titlebar {
  display: grid;
  grid-template-columns: 1fr auto 1fr;
  height: 45px;
  background: #ebebeb;
  border-bottom: 1px solid #d9dadb;
}
.quick-access { display: flex; align-items: center; gap: 12px; }
.quick-access > svg:first-child { margin-right: -4px; }
.quick-access .bar { width: 1px; height: 30px; background: #6d6d6d; }
.q-doc { margin-right: -4px; }
.window-title { font-size: 29px; line-height: 46px; margin-right: 52px; color: #222; }
.window-buttons { display: flex; justify-content: flex-end; align-items: flex-start; }
.window-buttons button { width: 53px; height: 40px; display: grid; place-items: center; }
.window-buttons .close { width: 92px; margin-right: 3px; background: #bcbcbc; }

.tabs { display: flex; height: 47px; border-bottom: 1px solid #dadbdc; font-size: 20px; color: #444; align-items: stretch; }
.tab { padding: 10px 14px 0; }
.tab:nth-child(n + 3) { padding-left: 15px; padding-right: 15px; }
.tab.file { width: 112px; padding: 2px 0 0; background: #1979ca; color: #fff; }
.tab.active { width: 95px; padding: 10px 0 0; margin-bottom: -1px; background: #f5f6f8; border: 1px solid #dadbdc; border-bottom: 0; }
.fold { padding: 0 12px; }
.help { padding: 0 4px 0 0; }

.ribbon { display: flex; height: 179px; padding-top: 2px; background: #f5f6f8; border-bottom: 1px solid #dadbdc; color: #444; }
.group { display: flex; flex-direction: column; justify-content: space-between; padding-left: 4px; border-right: 1px solid #e2e3e4; margin-bottom: 3px; }
.group p { padding-right: 6px; font-size: 19px; line-height: 26px; text-align: center; color: #9a9a9a; }
.g-clip { width: 433px; }
.g-org { width: 390px; }
.g-new { width: 305px; }
.g-open { width: 246px; }
.g-select { width: 236px; padding-left: 7px; }
.tools { display: flex; align-items: flex-start; padding-top: 4px; }
.big { display: flex; flex-direction: column; align-items: center; font-size: 19px; line-height: 29px; }
.big svg { height: 64px; margin-bottom: 6px; }
.big span { white-space: nowrap; height: 29px; }
.b73 { width: 74px; }
.b76 { width: 76px; }
.b86 { width: 86px; }
.b96 { width: 96px; }
.b101 { width: 100px; }
.b106 { width: 106px; }
.ribbon button:disabled { color: #a0a0a0; }
.rule { width: 2px; height: 110px; margin: 10px 2px 0 6px; background: #e2e3e4; }
.small { display: flex; flex-direction: column; align-items: flex-start; margin-left: 4px; font-size: 20px; }
.g-select .small { margin-left: 0; }
.g-new .small { margin-left: 6px; }
.small button { display: flex; align-items: center; gap: 2px; height: 38px; white-space: nowrap; }
.small.wide { padding-top: 2px; }
.small.wide button { height: 44px; }
.caret { display: inline-block; border: 4px solid transparent; border-top: 5px solid #000; border-bottom: 0; vertical-align: middle; margin: 0 0 6px 8px; }
.small .caret { margin-left: 4px; }
.caret.alone { margin-left: 0; }

.address-row { display: flex; align-items: center; height: 67px; padding: 0 12px 0 3px; }
.recent { padding: 0 10px 0 9px; }
.up { padding: 0 14px 0 11px; }
.address { flex: 1; display: flex; align-items: center; height: 39px; border: 1px solid #d9d9d9; margin-right: 12px; }
.sep { border: 6px solid transparent; border-left: 8px solid #777; border-right: 0; margin: 0 14px 0 16px; }
.addr-open, .refresh { height: 100%; display: grid; place-items: center; color: #666; }
.addr-open { width: 24px; }
.refresh { width: 34px; border-left: 1px solid #d9d9d9; }
.search { display: flex; align-items: center; width: 406px; height: 39px; padding: 0 12px 0 11px; border: 1px solid #d9d9d9; font-size: 23px; }
.search input { flex: 1; min-width: 0; padding: 0; border: 0; outline: 0; background: none; }
.search input::placeholder { color: #6d6d6d; opacity: 1; }

.body { flex: 1; display: flex; }
.tree { width: 318px; padding-top: 9px; border-right: 3px solid #f5f5f5; }
.node { display: flex; align-items: center; gap: 4px; height: 40px; margin: 0 1px 0 2px; padding-left: 35px; border: 1px solid transparent; white-space: nowrap; }
.node span { padding-top: 2px; }
.node.gap { margin-top: 40px; }
.node.l1 { padding-left: 45px; }
.node.l2 { padding-left: 55px; }
.node.l3 { padding-left: 65px; }
.node.current { background: #f7f7f7; border-color: #dedede; }
.node.faded svg { opacity: .5; }

.files { flex: 1; padding-left: 30px; }
table { table-layout: fixed; width: 1224px; border-collapse: collapse; }
th { position: relative; height: 65px; padding: 11px 0 0 12px; text-align: left; vertical-align: top; font-weight: 400; color: #4c607a; background: linear-gradient(#e3e8ee, #e3e8ee) 100% 0 / 1px 47px no-repeat; }
.c-name { width: 550px; padding-left: 0; }
.c-date, .c-type { width: 256px; }
.c-size { background: none; }
.c-size::after { content: ""; position: absolute; top: 0; right: -8px; width: 1px; height: 47px; background: #e3e8ee; }
.name-head { display: flex; align-items: center; gap: 21px; margin-left: -6px; }
.sort { position: absolute; top: 1px; left: 263px; border: 8px solid transparent; border-bottom-color: #5f9dbf; border-top: 0; }
td { height: 42px; padding: 0 0 0 12px; }
td:first-child { padding: 0; }
.dim { color: #6d6d6d; font-size: 23px; }
.cell { display: flex; align-items: center; padding-left: 8px; }
.off { visibility: hidden; }
.ficon { position: relative; margin: 0 8px 0 4px; }
.badge { position: absolute; left: -2px; bottom: -1px; }
tr.selected { background: #f7f7f7; outline: 1px solid #dedede; }

.status { display: flex; align-items: center; height: 46px; padding-left: 28px; color: #1e395b; font-size: 23px; }
.status i { width: 2px; height: 22px; margin: 0 21px; background: #f0f0f0; }
.view { display: grid; place-items: center; height: 46px; width: 44px; }
.view.on { background: #cbe8f6; border: 1px solid #26a0da; }
.view:last-child { margin-right: 8px; }

.dialog { position: absolute; }
.svn { left: 798px; top: 543px; width: 1765px; padding: 0 33px 35px 32px; background: #ebebeb; border: 1px solid #cfcfcf; }
.svn-title { display: grid; grid-template-columns: 1fr auto 1fr; margin: 0 -23px 0 -19px; height: 75px; }
.svn-title > svg { margin-top: 14px; }
.svn-title h2 { font-size: 29px; line-height: 58px; color: #222; }
.svn-title .window-buttons .close { height: 41px; margin-right: 2px; }
.svn-frame { border: 1px solid #d9d9d9; background: #f0f0f0; }
.svn-bar { display: flex; align-items: center; height: 42px; padding: 0 2px; background: #f5f6f8; border-bottom: 1px solid #e6e9ee; }
.sq { width: 23px; height: 23px; margin-right: 8px; display: grid; place-items: center; background: #eaeaea; border: 1px solid #acacac; }
.svn-bar label { margin: 0 10px 0 2px; }
.combo { position: relative; flex: 1; align-self: flex-start; display: flex; }
.combo select { appearance: none; width: 100%; height: 39px; border: 1px solid #acacac; border-radius: 0; background: #fff; }
.combo svg { position: absolute; right: 10px; top: 13px; color: #555; }
.parent { width: 22px; height: 38px; margin: 0 12px 0 8px; display: grid; place-items: center; background: #e8e8e8; border: 1px solid #acacac; }
.head { width: 62px; height: 40px; margin-left: 12px; font-size: 20px; background: #e8e8e8; border: 1px solid #acacac; }
.panes { display: flex; gap: 4px; padding-top: 8px; }
.pane { height: 710px; background: #fff; border: 1px solid #828790; }
.pane.left { width: 389px; }
.pane.right { flex: 1; padding-top: 8px; text-align: center; }
.pane p { font-family: "Liberation Sans", Arial, sans-serif; font-size: 22px; }
.svn-actions { display: flex; justify-content: flex-end; gap: 20px; padding: 28px 1px 0 0; }
.btn { width: 148px; height: 42px; font-size: 20px; background: linear-gradient(#f0f0f0, #e5e5e5); border: 1px solid #acacac; }
.btn:disabled { background: #efefef; border-color: #d9d9d9; color: #838383; }

.auth { left: 1241px; top: 727px; width: 872px; padding: 0 11px 11px; background: #f0c869; border: 1px solid #b5954c; box-shadow: 0 2px 6px rgba(0, 0, 0, .2); }
.auth-title { display: flex; height: 57px; }
.auth-title h2 { flex: 1; padding-left: 66px; text-align: center; font-size: 29px; line-height: 58px; color: #222; }
.auth-close { width: 66px; height: 42px; display: grid; place-items: center; background: #c75050; }
.auth-body { background: #fff; border: 1px solid #c7a557; font-size: 23px; }
.auth-main { padding: 22px 32px 33px; }
.auth-main h3 { font-size: 30px; line-height: 42px; margin-bottom: 6px; color: #039; }
.auth-main p { line-height: 32px; white-space: nowrap; }
.auth-main hr { height: 2px; margin: 9px 0 23px; border: 0; background: #ddd; }
.card { display: flex; margin: 0 8px; padding: 28px 23px 12px; background: #cbe8f6; border: 1px solid #26a0da; height: 209px; }
.avatar { margin: 27px 43px 0 0; }
.fields { display: flex; flex-direction: column; }
.field { width: 392px; height: 49px; margin-bottom: 25px; padding: 0 9px 3px; border: 1px solid #707070; border-radius: 3px; background: #fff; outline: 0; }
.field.focus { border-color: #33638c; }
.field::placeholder { color: #666; opacity: 1; }
.remember { display: flex; align-items: center; gap: 14px; margin-top: -12px; }
.remember input { width: 31px; height: 31px; }
.auth-actions { display: flex; justify-content: flex-end; gap: 8px; padding: 9px 11px 10px; background: #f0f0f0; border-top: 1px solid #dfdfdf; }
.auth-actions .btn { height: 49px; font-size: 22px; }
.auth-actions .primary { border-color: #39f; }
.ibeam { position: absolute; left: 590px; top: 282px; }

.taskbar {
  display: flex;
  height: 72px;
  color: #fff;
  background:
    linear-gradient(to top right, transparent 50%, #c9921f 50%) 100% 0 / 105px 44px no-repeat,
    linear-gradient(77deg, transparent 56%, #bfa678 56.1%),
    linear-gradient(90deg, #bb9444 0, #b98a36 9%, #b9842a 13%, #b47c28 35%, #a6722a 45%, #9a671f 57%);
  border-top: 1px solid #a08348;
}
.start { width: 92px; padding-left: 16px; }
.task { position: relative; width: 103px; margin-right: 3px; display: grid; place-items: center; background: rgba(255, 255, 255, .18); border: 1px solid rgba(255, 255, 255, .45); outline: 1px solid rgba(90, 60, 10, .4); outline-offset: -2px; }
.stack { width: 96px; margin-right: 10px; padding-right: 4px; }
.stack::after { content: ""; position: absolute; top: -1px; right: -8px; width: 7px; height: 71px; border-right: 1px solid rgba(255, 255, 255, .5); border-left: 1px solid rgba(90, 60, 10, .5); background: rgba(255, 255, 255, .18); }
.task.active { background: rgba(255, 255, 255, .42); border-color: #fff; }
.tray { display: flex; align-items: center; padding-right: 25px; font-size: 23px; }
.more { margin: 6px 44px 0 42px; }
.batt { margin: 0 16px 0 26px; }
.lan { margin-right: 13px; }
.clock { display: flex; flex-direction: column; align-items: center; margin-left: 29px; line-height: 33px; }
</style>
